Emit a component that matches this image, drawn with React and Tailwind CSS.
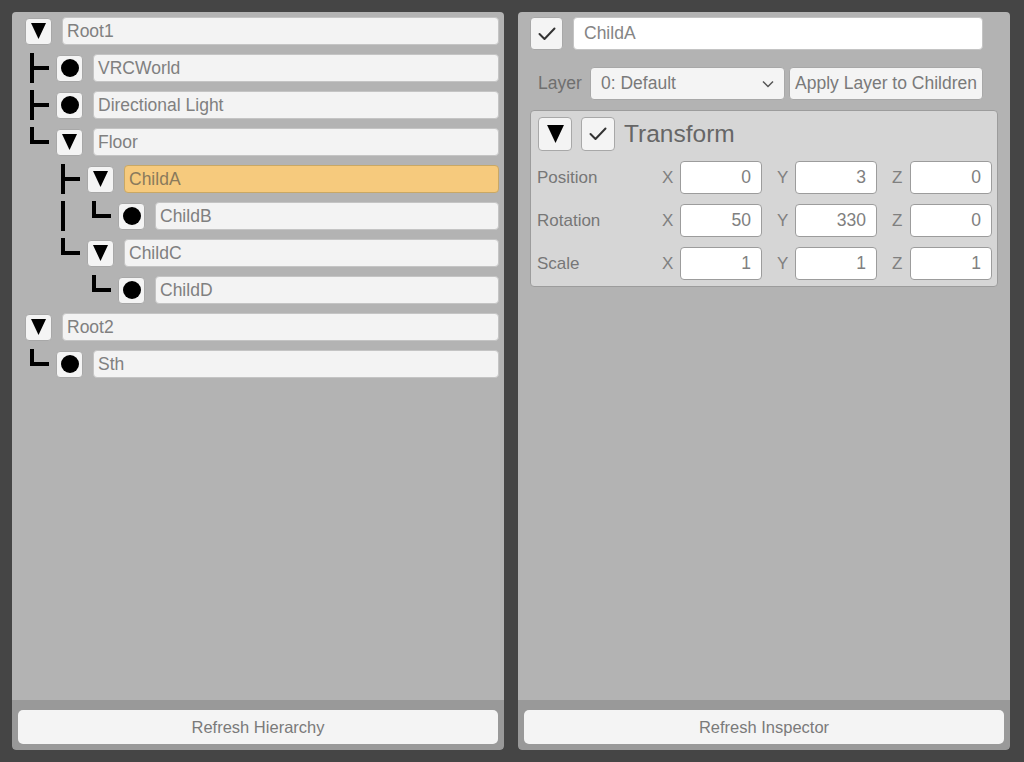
import React from 'react';

const tree = [
  { name: 'Root1', prefix: [], kind: 'tri' },
  { name: 'VRCWorld', prefix: ['T'], kind: 'dot' },
  { name: 'Directional Light', prefix: ['T'], kind: 'dot' },
  { name: 'Floor', prefix: ['L'], kind: 'tri' },
  { name: 'ChildA', prefix: [' ', 'T'], kind: 'tri', selected: true },
  { name: 'ChildB', prefix: [' ', 'I', 'L'], kind: 'dot' },
  { name: 'ChildC', prefix: [' ', 'L'], kind: 'tri' },
  { name: 'ChildD', prefix: [' ', ' ', 'L'], kind: 'dot' },
  { name: 'Root2', prefix: [], kind: 'tri' },
  { name: 'Sth', prefix: ['L'], kind: 'dot' },
];

const transform = [
  { label: 'Position', values: ['0', '3', '0'] },
  { label: 'Rotation', values: ['50', '330', '0'] },
  { label: 'Scale', values: ['1', '1', '1'] },
];

function Connector({ type }) {
  return (
    <div className="w-[31px] h-[28px] shrink-0">
      {type !== ' ' && (
        <svg width="31" height="28" viewBox="0 0 31 28" className="overflow-visible">
          {type === 'L' ? (
            <rect x="5" y="-1" width="4" height="17" fill="#000" />
          ) : (
            <rect x="5" y="-1" width="4" height="30" fill="#000" />
          )}
          {type !== 'I' && <rect x="5" y="12" width="19" height="4" fill="#000" />}
        </svg>
      )}
    </div>
  );
}

function Triangle({ size = 15 }) {
  return (
    <svg width={size} height={size + 1} viewBox="0 0 15 16">
      <polygon points="0,0 15,0 7.5,16" fill="#000" />
    </svg>
  );
}

function Check() {
  return (
    <svg width="18" height="14" viewBox="0 0 18 14" fill="none">
      <polyline points="1.5,7 6.5,12 16.5,1.5" stroke="#333" strokeWidth="2" strokeLinecap="round" strokeLinejoin="round" />
    </svg>
  );
}

function TreeRow({ item }) {
  return (
    <div className="flex items-center h-[28px]">
      {item.prefix.map((p, i) => (
        <Connector key={i} type={p} />
      ))}
      <div className="w-[27px] h-[27px] shrink-0 flex items-center justify-center bg-[#f4f4f4] border border-[#a8a8a8] rounded-[4px]">
        {item.kind === 'tri' ? (
          <Triangle />
        ) : (
          <div className="w-[18px] h-[18px] rounded-full bg-black" />
        )}
      </div>
      <div
        className={
          item.selected
            ? 'ml-[10px] flex-1 h-[28px] flex items-center pl-[4px] rounded-[4px] border border-[#c9a865] bg-[#f6ca7d] text-[#8a7a5c] text-[17.5px]'
            : 'ml-[10px] flex-1 h-[28px] flex items-center pl-[4px] rounded-[4px] border border-[#c4c4c4] bg-[#f3f3f3] text-[#808080] text-[17.5px]'
        }
      >
        {item.name}
      </div>
    </div>
  );
}

function BottomBar({ label }) {
  return (
    <div className="bg-[#999999] px-[6px] pt-[10px] pb-[6px] rounded-b-[4px]">
      <div className="h-[34px] flex items-center justify-center bg-[#f4f4f4] rounded-[5px] text-[#7a7a7a] text-[16.5px]">
        {label}
      </div>
    </div>
  );
}

export default function App() {
  return (
    <div className="w-[1024px] h-[762px] bg-[#454545] flex gap-[14px] pl-[12px] pr-[14px] py-[12px] font-['Liberation_Sans',Arial,sans-serif]">
      {/* Hierarchy */}
      <div className="flex-1 flex flex-col rounded-[4px] overflow-hidden">
        <div className="flex-1 bg-[#b3b3b3] pl-[13px] pr-[5px] pt-[5px] flex flex-col gap-[9px]">
          {tree.map((item) => (
            <TreeRow key={item.name} item={item} />
          ))}
        </div>
        <BottomBar label="Refresh Hierarchy" />
      </div>

      {/* Inspector */}
      <div className="flex-1 flex flex-col rounded-[4px] overflow-hidden">
        <div className="flex-1 bg-[#b3b3b3] pl-[12px] pr-[12px] pt-[5px] flex flex-col">
          <div className="flex items-center gap-[10px] pr-[15px]">
            <div className="w-[33px] h-[33px] shrink-0 flex items-center justify-center bg-[#f4f4f4] border border-[#a8a8a8] rounded-[4px]">
              <Check />
            </div>
            <div className="flex-1 h-[33px] flex items-center pl-[10px] bg-white border border-[#c4c4c4] rounded-[4px] text-[#858585] text-[17.5px]">
              ChildA
            </div>
          </div>

          <div className="flex items-center mt-[17px] pr-[15px]">
            <span className="w-[60px] pl-[8px] text-[#6f6f6f] text-[17.5px]">Layer</span>
            <div className="w-[195px] h-[33px] flex items-center justify-between pl-[10px] pr-[10px] bg-[#f4f4f4] border border-[#a8a8a8] rounded-[4px] text-[#7a7a7a] text-[17.5px]">
              <span>0: Default</span>
              <svg width="12" height="8" viewBox="0 0 12 8" fill="none">
                <polyline points="1,1.5 6,6.5 11,1.5" stroke="#555" strokeWidth="1.5" />
              </svg>
            </div>
            <div className="flex-1 ml-[4px] h-[33px] flex items-center justify-center bg-[#f4f4f4] border border-[#a8a8a8] rounded-[4px] text-[#7a7a7a] text-[17.5px] whitespace-nowrap">
              Apply Layer to Children
            </div>
          </div>

          <div className="mt-[10px] bg-[#d6d6d6] border border-[#9c9c9c] rounded-[4px] pl-[6px] pr-[5px] pt-[5px] pb-[6px]">
            <div className="flex items-center pl-[1px]">
              <div className="w-[34px] h-[34px] flex items-center justify-center bg-[#f4f4f4] border border-[#a8a8a8] rounded-[4px]">
                <Triangle size={17} />
              </div>
              <div className="ml-[9px] w-[34px] h-[34px] flex items-center justify-center bg-[#f4f4f4] border border-[#a8a8a8] rounded-[4px]">
                <Check />
              </div>
              <span className="ml-[9px] text-[#666666] text-[24.5px]">Transform</span>
            </div>
            <div className="flex flex-col gap-[10px] mt-[8px]">
              {transform.map((row) => (
                <div key={row.label} className="flex items-center h-[33px]">
                  <span className="w-[127px] text-[#777777] text-[17px]">{row.label}</span>
                  <div className="flex gap-[15px]">
                    {['X', 'Y', 'Z'].map((axis, i) => (
                      <div key={axis} className="w-[100px] flex items-center">
                        <span className="w-[18px] text-[#808080] text-[17px]">{axis}</span>
                        <div className="flex-1 h-[33px] flex items-center justify-end pr-[10px] bg-white border border-[#9c9c9c] rounded-[4px] text-[#808080] text-[17.5px]">
                          {row.values[i]}
                        </div>
                      </div>
                    ))}
                  </div>
                </div>
              ))}
            </div>
          </div>
        </div>
        <BottomBar label="Refresh Inspector" />
      </div>
    </div>
  );
}
